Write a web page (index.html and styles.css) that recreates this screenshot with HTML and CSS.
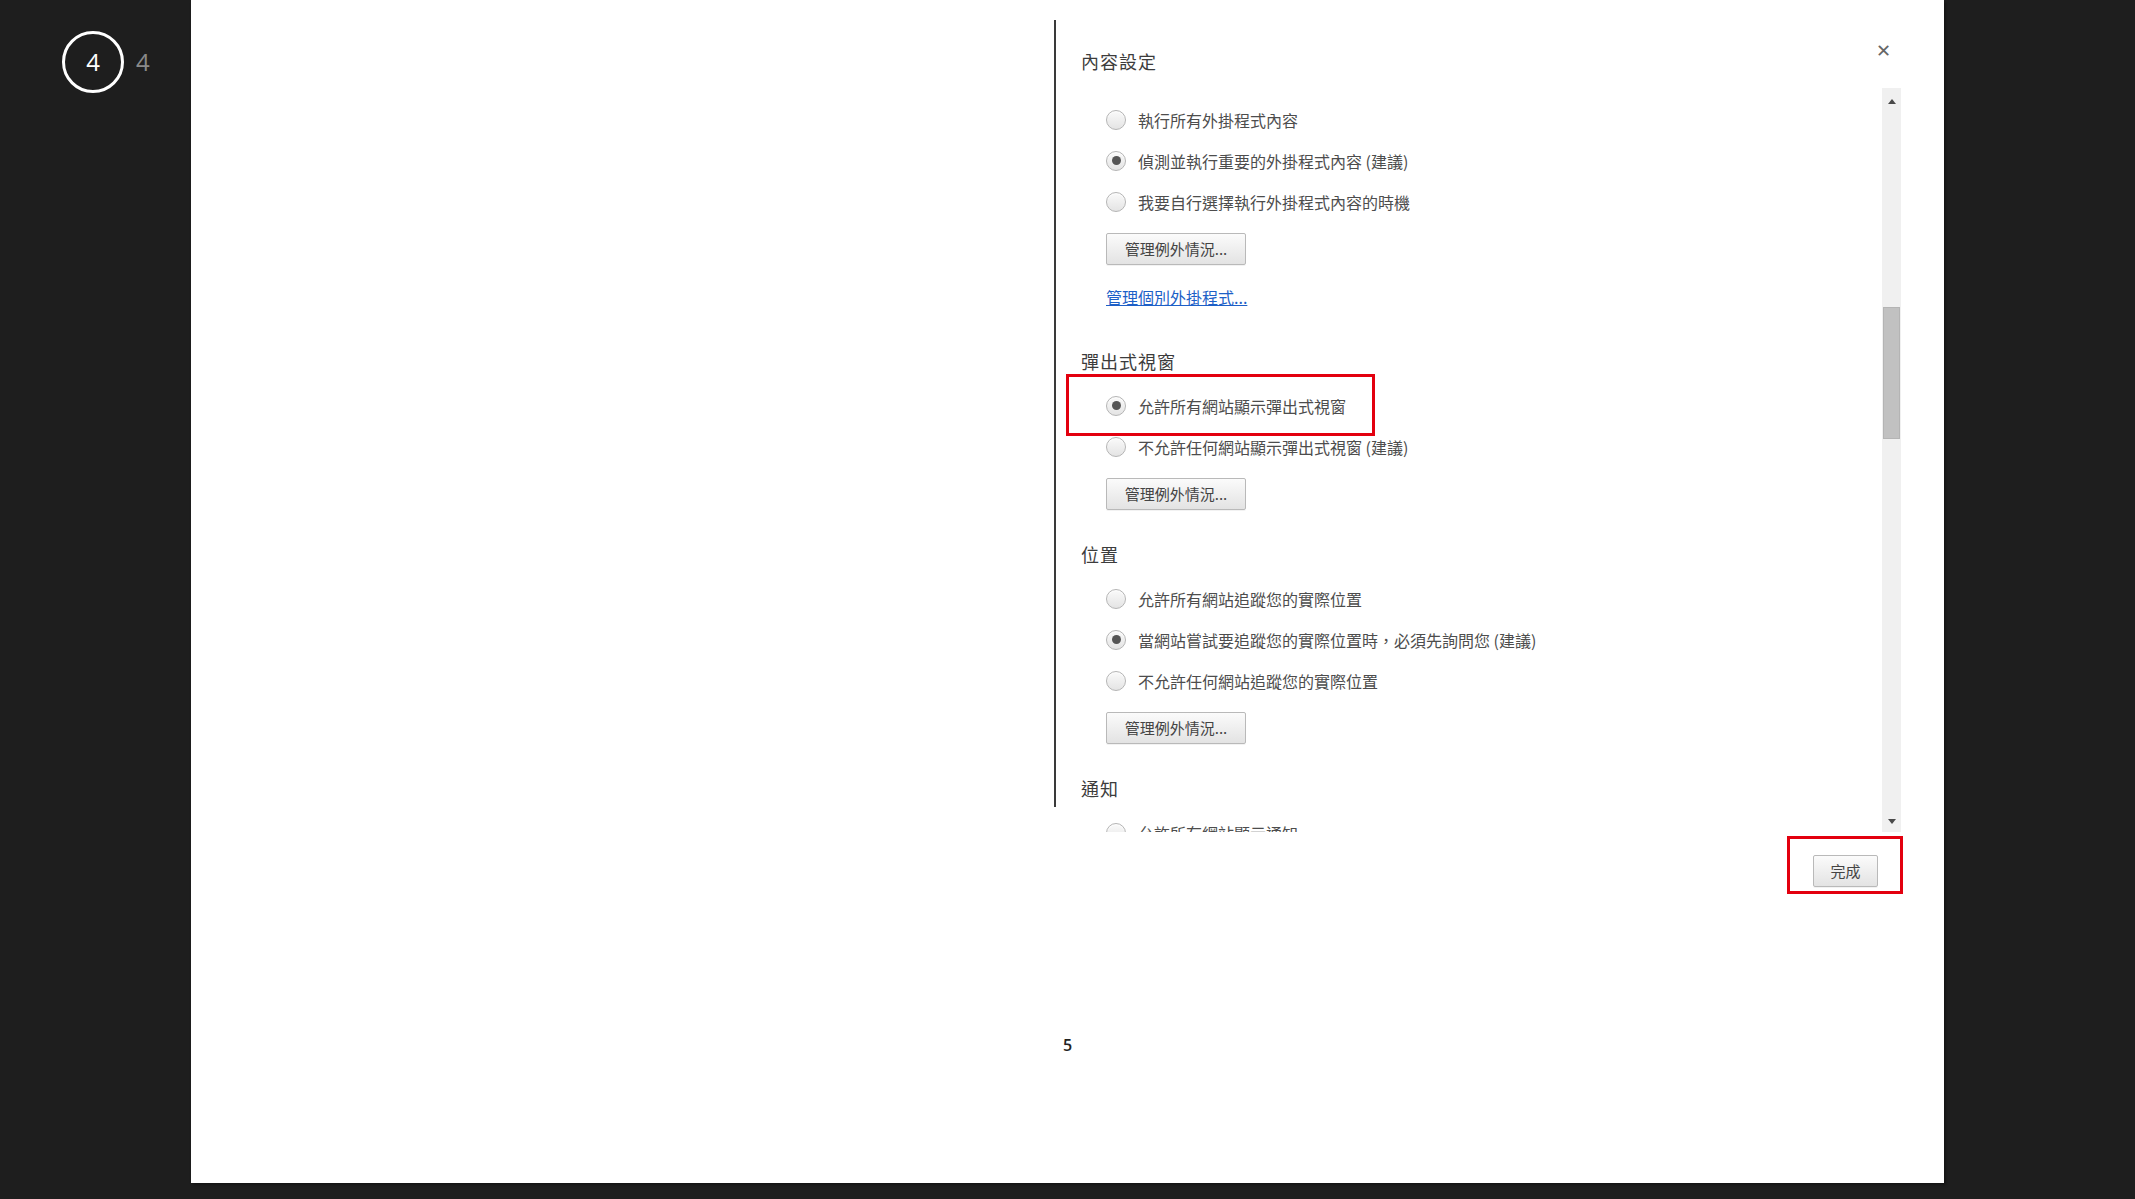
FILE: index.html
```html
<!DOCTYPE html>
<html lang="zh-Hant">
<head>
<meta charset="utf-8">
<title>內容設定</title>
<link rel="stylesheet" href="styles.css">
</head>
<body>
<aside class="side">
  <div class="step-circle">4</div>
  <div class="step-total">4</div>
</aside>
<main class="page">
  <div class="dialog">
    <div class="rule"></div>
    <div class="panel">
      <div class="panel-head">
        <h2 class="title">內容設定</h2>
        <span class="close">✕</span>
      </div>
      <div class="scroll-wrap">
        <div class="scroll-content">
          <div class="group first">
            <div class="radio-row"><span class="radio"></span><span class="label">執行所有外掛程式內容</span></div>
            <div class="radio-row"><span class="radio checked"></span><span class="label">偵測並執行重要的外掛程式內容 (建議)</span></div>
            <div class="radio-row"><span class="radio"></span><span class="label">我要自行選擇執行外掛程式內容的時機</span></div>
            <button class="btn">管理例外情況...</button>
            <a class="link" href="#">管理個別外掛程式...</a>
          </div>

          <h3 class="heading link-after">彈出式視窗</h3>
          <div class="group">
            <div class="radio-row annotated"><span class="radio checked"></span><span class="label">允許所有網站顯示彈出式視窗</span><span class="mark-frame"></span></div>
            <div class="radio-row"><span class="radio"></span><span class="label">不允許任何網站顯示彈出式視窗 (建議)</span></div>
            <button class="btn">管理例外情況...</button>
          </div>

          <h3 class="heading">位置</h3>
          <div class="group">
            <div class="radio-row"><span class="radio"></span><span class="label">允許所有網站追蹤您的實際位置</span></div>
            <div class="radio-row"><span class="radio checked"></span><span class="label">當網站嘗試要追蹤您的實際位置時，必須先詢問您 (建議)</span></div>
            <div class="radio-row"><span class="radio"></span><span class="label">不允許任何網站追蹤您的實際位置</span></div>
            <button class="btn">管理例外情況...</button>
          </div>

          <h3 class="heading">通知</h3>
          <div class="group">
            <div class="radio-row"><span class="radio"></span><span class="label">允許所有網站顯示通知</span></div>
          </div>
        </div>
        <div class="scrollbar">
          <span class="arrow up"></span>
          <span class="thumb"></span>
          <span class="arrow down"></span>
        </div>
      </div>
      <div class="panel-foot">
        <div class="done-mark"><button class="btn done">完成</button></div>
      </div>
    </div>
  </div>
  <div class="page-num">5</div>
</main>
<div class="side-right"></div>
</body>
</html>
```
FILE: styles.css
```css
* { box-sizing: border-box; }
html, body { margin: 0; padding: 0; }
body {
  background: #1e1e1e;
  width: 2135px;
  height: 1199px;
  overflow: hidden;
  display: flex;
  align-items: flex-start;
  font-family: "Noto Sans CJK TC", "Noto Sans", "Liberation Sans", sans-serif;
}

/* left step indicator */
.side {
  width: 191px;
  flex: none;
  display: flex;
  align-items: center;
  padding: 31px 0 0 62px;
  gap: 12px;
}
.step-circle {
  width: 62px;
  height: 62px;
  border: 3px solid #fff;
  border-radius: 50%;
  color: #fff;
  font-family: "Open Sans", "Liberation Sans", sans-serif;
  font-size: 24px;
  display: flex;
  align-items: center;
  justify-content: center;
  line-height: 1;
}
.step-total {
  color: #8a8a8a;
  font-family: "Open Sans", "Liberation Sans", sans-serif;
  font-size: 24px;
  line-height: 1;
}

/* white page */
.page {
  width: 1753px;
  height: 1183px;
  flex: none;
  background: #fff;
  box-shadow: 2px 2px 3px rgba(0,0,0,0.35);
  padding: 20px 0 0 863px;
  display: flex;
  flex-direction: column;
}
.side-right { flex: 1; }

.dialog {
  display: flex;
  align-items: flex-start;
  width: 849px;
}
.rule {
  width: 2px;
  height: 787px;
  background: #3a3a3a;
  flex: none;
}
.panel {
  flex: 1;
  display: flex;
  flex-direction: column;
}
.panel-head {
  height: 68px;
  display: flex;
  justify-content: space-between;
  align-items: flex-start;
  padding: 29px 12px 0 25px;
}
.title {
  margin: 0;
  font-size: 18px;
  line-height: 24px;
  font-weight: 400;
  color: #3c3c3c;
  letter-spacing: 1px;
}
.close {
  color: #666;
  font-size: 18px;
  font-weight: 700;
  line-height: 18px;
  margin-top: -7px;
  font-family: "DejaVu Sans", sans-serif;
}

.scroll-wrap {
  height: 744px;
  display: flex;
}
.scroll-content {
  flex: 1;
  overflow: hidden;
  padding: 11px 0 0 25px;
}
.scrollbar {
  width: 19px;
  margin-right: 2px;
  background: #f0f0f0;
  display: flex;
  flex-direction: column;
  align-items: center;
  padding: 11px 0 8px;
}
.arrow {
  width: 0;
  height: 0;
  border-left: 4px solid transparent;
  border-right: 4px solid transparent;
}
.arrow.up { border-bottom: 5px solid #4a4a4a; }
.arrow.down { border-top: 5px solid #4a4a4a; margin-top: auto; }
.thumb {
  width: 17px;
  height: 132px;
  margin-top: 203px;
  background: #c1c1c1;
  border: 1px solid #b4b4b4;
}

/* groups */
.group {
  padding-left: 25px;
  display: flex;
  flex-direction: column;
  align-items: flex-start;
}
.heading {
  margin: 32px 0 0;
  font-size: 18px;
  line-height: 24px;
  font-weight: 400;
  color: #3c3c3c;
  letter-spacing: 1px;
}
.heading.link-after { margin-top: 42px; }
.heading + .group { margin-top: 12px; }

.radio-row {
  height: 41px;
  display: flex;
  align-items: center;
  gap: 12px;
  position: relative;
}
.radio {
  width: 20px;
  height: 20px;
  border-radius: 50%;
  border: 1px solid #b5b5b5;
  background: linear-gradient(#fafafa, #e4e4e4);
  box-shadow: inset 0 1px 1px rgba(255,255,255,0.8);
  flex: none;
  display: flex;
  align-items: center;
  justify-content: center;
}
.radio.checked::after {
  content: "";
  width: 9px;
  height: 9px;
  border-radius: 50%;
  background: #555;
}
.label {
  font-size: 16px;
  line-height: 20px;
  color: #4d4d4d;
  white-space: nowrap;
}

.mark-frame {
  position: absolute;
  left: -40px;
  top: -11px;
  width: 309px;
  height: 62px;
  border: 3px solid #e3000f;
}

.btn {
  margin-top: 11px;
  height: 32px;
  padding: 0 11px;
  font-family: "Noto Sans CJK TC", "Noto Sans", sans-serif;
  font-size: 15px;
  color: #444;
  background: linear-gradient(#fbfbfb, #e3e3e3);
  border: 1px solid #b9b9b9;
  border-radius: 2px;
  box-shadow: 0 1px 0 rgba(0,0,0,0.05);
  width: 140px;
  line-height: 30px;
}

.link {
  margin-top: 22px;
  font-size: 16px;
  line-height: 20px;
  color: #1d5fc7;
  text-decoration: underline;
}

.panel-foot {
  display: flex;
  justify-content: flex-end;
  padding-top: 4px;
}
.done-mark {
  border: 3px solid #e3000f;
  padding: 16px 22px 4px 23px;
}
.btn.done {
  margin: 0;
  width: 65px;
  padding: 0;
}

.page-num {
  margin-top: 141px;
  margin-left: -863px;
  text-align: center;
  font-family: "Open Sans", "Liberation Sans", sans-serif;
  font-size: 16px;
  font-weight: 600;
  color: #222;
  line-height: 20px;
}
```
